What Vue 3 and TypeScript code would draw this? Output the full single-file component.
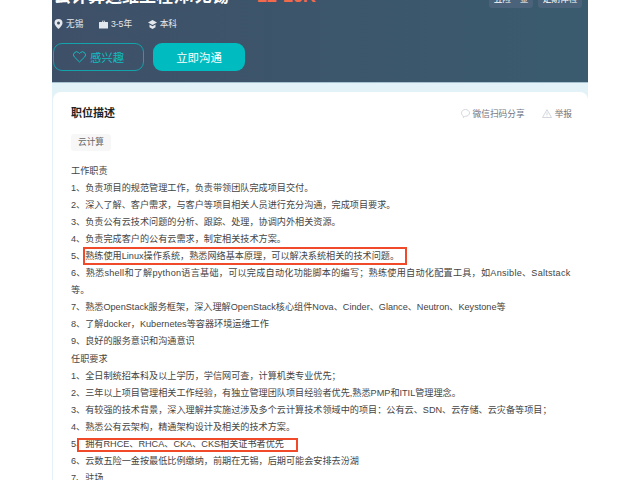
<script setup lang="ts">
const tags = ['五险一金', '定期体检']
const duties = [
  '工作职责',
  '1、负责项目的规范管理工作，负责带领团队完成项目交付。',
  '2、深入了解、客户需求，与客户等项目相关人员进行充分沟通，完成项目要求。',
  '3、负责公有云技术问题的分析、跟踪、处理，协调内外相关资源。',
  '4、负责完成客户的公有云需求，制定相关技术方案。',
]
const skills = [
  '7、熟悉OpenStack服务框架，深入理解OpenStack核心组件Nova、Cinder、Glance、Neutron、Keystone等',
  '8、了解docker，Kubernetes等容器环境运维工作',
  '9、良好的服务意识和沟通意识',
  '任职要求',
  '1、全日制统招本科及以上学历，学信网可查，计算机类专业优先；',
  '2、三年以上项目管理相关工作经验，有独立管理团队项目经验者优先,熟悉PMP和ITIL管理理念。',
  '3、有较强的技术背景，深入理解并实施过涉及多个云计算技术领域中的项目：公有云、SDN、云存储、云灾备等项目；',
  '4、熟悉公有云架构，精通架构设计及相关的技术方案。',
]
</script>

<template>
  <main class="page">
    <header class="hero">
      <div class="title-row">
        <h1 class="title">云计算运维工程师/无锡</h1>
        <span class="salary">12-16K</span>
        <div class="tags">
          <span v-for="t in tags" :key="t" class="tag">{{ t }}</span>
        </div>
      </div>
      <div class="meta">
        <span class="meta-item">
          <svg width="9" height="10" viewBox="0 0 9 10"><path d="M4.500 0a4 4 0 0 0-4 4c0 2.600 4 6 4 6s4-3.400 4-6a4 4 0 0 0-4-4zm0 5.500a1.500 1.500 0 1 1 0-3 1.500 1.500 0 0 1 0 3z" fill="#e4e8ec"/></svg>无锡
        </span>
        <span class="meta-item">
          <svg width="9" height="9" viewBox="0 0 9 9"><path d="M3 2V.7h3V2h2.500a.5.5 0 0 1 .5.500V8.500H0V2.500A.5.5 0 0 1 .5 2zM3.700 2h1.600V1.300H3.700zM0 4.500h9v.6H0z" fill="#e4e8ec"/></svg>3-5年
        </span>
        <span class="meta-item">
          <svg width="9" height="9" viewBox="0 0 9 9"><path d="M4.500 0 9 2.500 4.500 5 0 2.500zM1.500 4.500l3 1.700 3-1.700v2.800L4.500 9l-3-1.700z" fill="#e4e8ec"/></svg>本科
        </span>
      </div>
      <div class="actions">
        <button class="btn btn-outline" type="button">
          <svg width="13" height="12" viewBox="0 0 13 12"><path d="M6.500 11 1.400 6A3 3 0 0 1 5.700 1.700l.8.800.8-.8A3 3 0 0 1 11.600 6z" fill="none" stroke="#12bcc0" stroke-width="1"/></svg>
          感兴趣
        </button>
        <button class="btn btn-solid" type="button">立即沟通</button>
      </div>
    </header>

    <section class="band">
      <article class="card">
        <div class="card-head">
          <h2 class="card-title">职位描述</h2>
          <div class="links">
            <span class="link">
              <svg width="9" height="9" viewBox="0 0 9 9"><path d="M4.500.5c2.200 0 4 1.500 4 3.400S6.700 7.300 4.500 7.300H3.700L2.300 8.500V7C1.200 6.400.5 5.300.5 3.900.5 2 2.300.5 4.500.5z" fill="none" stroke="#c9cdd4" stroke-width=".8"/></svg>
              微信扫码分享
            </span>
            <span class="link">
              <svg width="10" height="9" viewBox="0 0 10 9"><path d="M5 .7 9.500 8.500H.5zM5 3.400v2.800M5 6.800v.6" fill="none" stroke="#c9cdd4" stroke-width=".8"/></svg>
              举报
            </span>
          </div>
        </div>
        <span class="chip">云计算</span>
        <div class="desc">
          <p v-for="l in duties" :key="l">{{ l }}</p>
          <p>5、<span class="mark mark-a">熟练使用Linux操作系统，熟悉网络基本原理，可以解决系统相关的技术问题。</span></p>
          <p class="loose">6、熟悉shell和了解python语言基础，可以完成自动化功能脚本的编写；熟练使用自动化配置工具，如Ansible、Saltstack等。</p>
          <p v-for="l in skills" :key="l">{{ l }}</p>
          <p>5<span class="mark mark-b">、拥有RHCE、RHCA、CKA、CKS相关证书者优先</span></p>
          <p>6、云数五险一金按最低比例缴纳，前期在无锡，后期可能会安排去汾湖</p>
          <p>7、驻场</p>
        </div>
      </article>
    </section>
  </main>
</template>

<style>
html, body { margin: 0; background: #fff; overflow: hidden; }
</style>

<style scoped>
.page {
  width: 536px;
  height: 480px;
  margin-left: 52px;
  overflow: hidden;
  font-family: "Liberation Sans", "Noto Sans CJK SC", sans-serif;
}
.hero {
  height: 83px;
  box-sizing: border-box;
  border-bottom: 1px solid #a8c3cf;
  background: linear-gradient(90deg, #3e5068, #3a5b6e);
  color: #fff;
  overflow: hidden;
}
.title-row { display: flex; align-items: center; height: 10px; padding: 0 6px 0 2px; }
.title { margin: 0; font-size: 17px; line-height: 24px; font-weight: 700; white-space: nowrap; position: relative; top: -8px; }
.salary { margin-left: 28px; color: #f2694c; font-size: 18px; font-weight: 700; white-space: nowrap; position: relative; top: -9px; }
.tags { margin-left: auto; display: flex; gap: 5px; position: relative; top: -6px; }
.tag { width: 44px; height: 17px; line-height: 17px; text-align: center; font-size: 8.700px; background: #4a637a; border-radius: 3px; white-space: nowrap; }
.meta { display: flex; gap: 15.500px; height: 10px; margin: 9px 0 0 2px; font-size: 8.700px; line-height: 10px; color: #e4e8ec; }
.meta-item { display: flex; align-items: center; gap: 3px; }
.actions { display: flex; gap: 9px; margin: 14px 0 0 1px; }
.btn { height: 28px; border-radius: 9px; font: inherit; font-size: 11.400px; padding: 0; display: flex; align-items: center; justify-content: center; }
.btn-outline { width: 91px; gap: 4px; background: transparent; border: 1px solid #12a3ab; color: #12bcc0; }
.btn-solid { width: 92px; background: #00bcc0; border: 0; color: #fff; }
.band { background: #e3f2f7; padding: 9px 0 0 1px; height: 397px; box-sizing: border-box; }
.card { height: 100%; box-sizing: border-box; background: #fff; border-radius: 8px 8px 0 0; padding: 15px 16px 0 18px; overflow: hidden; }
.card-head { display: flex; justify-content: space-between; align-items: center; height: 13px; }
.card-title { margin: 0; font-size: 11px; line-height: 13px; font-weight: 700; color: #222; }
.links { display: flex; gap: 17px; font-size: 8.700px; color: #6d7482; }
.link { display: flex; align-items: center; gap: 3px; }
.chip { display: block; margin-top: 14px; width: 40px; height: 17px; line-height: 17px; text-align: center; font-size: 8.700px; color: #666; background: #f7f7f7; border-radius: 3px; }
.desc { margin-top: 12px; width: 505px; font-size: 9.150px; line-height: 17.050px; color: #444; }
.desc p { margin: 0; }
.desc .loose { letter-spacing: 0.240px; }
.mark { position: relative; display: inline-block; }
.mark::after { content: ""; position: absolute; box-sizing: border-box; border: 2px solid #f04a2a; }
.mark-a::after { left: -2px; top: -1px; width: 324px; height: 18px; }
.mark-b::after { left: 1px; top: 2px; width: 221px; height: 14px; }
</style>
